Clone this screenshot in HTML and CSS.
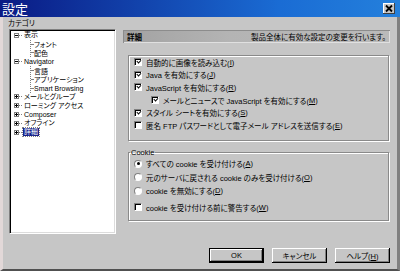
FILE: index.html
```html
<!DOCTYPE html>
<html lang="ja">
<head>
    <meta charset="UTF-8">
    <title>設定</title>
    <link rel="stylesheet" href="styles.css">
</head>
<body>
<div class="dialog">
    <div class="titlebar">
        <span class="title">設定</span>
        <span class="close">
            <svg viewBox="0 0 12 11" width="12" height="11"><path d="M3 2.5 L9 8.5 M9 2.5 L3 8.5" stroke="#000" stroke-width="1.8"/></svg>
        </span>
    </div>

    <div class="frame">
        <div class="cat-label">カテゴリ</div>

        <div class="main">
            <!-- category tree -->
            <div class="tree">
                <div class="node"><span class="tog"></span><span class="dash"></span><span class="lbl">表示</span></div>
                <div class="kids">
                    <div class="leaf">フォント</div>
                    <div class="leaf">配色</div>
                </div>
                <div class="node"><span class="tog"></span><span class="dash"></span><span class="lbl">Navigator</span></div>
                <div class="kids">
                    <div class="leaf">言語</div>
                    <div class="leaf">アプリケーション</div>
                    <div class="leaf">Smart Browsing</div>
                </div>
                <div class="node"><span class="tog plus"></span><span class="dash"></span><span class="lbl">メールとグループ</span></div>
                <div class="node"><span class="tog plus"></span><span class="dash"></span><span class="lbl">ローミング アクセス</span></div>
                <div class="node"><span class="tog plus"></span><span class="dash"></span><span class="lbl">Composer</span></div>
                <div class="node"><span class="tog plus"></span><span class="dash"></span><span class="lbl">オフライン</span></div>
                <div class="node"><span class="tog plus"></span><span class="dash"></span><span class="lbl sel">詳細</span></div>
            </div>

            <!-- settings panel -->
            <div class="panel">
                <div class="panel-head">
                    <b>詳細</b>
                    <span>製品全体に有効な設定の変更を行います。</span>
                </div>

                <div class="group general">
                    <div class="opt"><span class="cb on"></span>自動的に画像を読み込む(<u>I</u>)</div>
                    <div class="opt"><span class="cb on"></span>Java を有効にする(<u>J</u>)</div>
                    <div class="opt"><span class="cb on"></span>JavaScript を有効にする(<u>R</u>)</div>
                    <div class="opt sub"><span class="cb on"></span>メールとニュースで JavaScript を有効にする(<u>M</u>)</div>
                    <div class="opt"><span class="cb on"></span>スタイル シートを有効にする(<u>S</u>)</div>
                    <div class="opt"><span class="cb"></span>匿名 FTP パスワードとして電子メール アドレスを送信する(<u>E</u>)</div>
                </div>

                <fieldset class="group cookie">
                    <legend>Cookie</legend>
                    <div class="opt"><span class="rb on"></span>すべての cookie を受け付ける(<u>A</u>)</div>
                    <div class="opt"><span class="rb"></span>元のサーバに戻される cookie のみを受け付ける(<u>O</u>)</div>
                    <div class="opt"><span class="rb"></span>cookie を無効にする(<u>D</u>)</div>
                    <div class="opt warn"><span class="cb"></span>cookie を受け付ける前に警告する(<u>W</u>)</div>
                </fieldset>
            </div>
        </div>

        <div class="buttons">
            <button class="btn default">OK</button>
            <button class="btn">キャンセル</button>
            <button class="btn">ヘルプ(<u>H</u>)</button>
        </div>
    </div>
</div>
</body>
</html>
```

FILE: styles.css
```css
body {
    margin: 0;
    width: 400px;
    height: 271px;
    overflow: hidden;
    background-color: #c6c6c6;
    font-family: 'Liberation Sans', 'Noto Sans CJK JP', sans-serif;
    font-size: 7.5px;
    font-feature-settings: "palt";
    color: #000;
}

.dialog {
    display: flex;
    flex-direction: column;
    height: 271px;
}

/* title bar */
.titlebar {
    height: 17px;
    display: flex;
    align-items: center;
    justify-content: space-between;
    padding: 0 5px 0 2px;
    background: linear-gradient(to right, #0a1a84, #1a6cd4 70%, #2480dc);
}

.title {
    color: #fff;
    font-size: 13px;
    line-height: 14px;
    font-family: 'Noto Sans CJK JP', sans-serif;
}

.close {
    display: flex;
    width: 12px;
    height: 11px;
    background-color: #c6c6c6;
    box-shadow: inset -1px -1px 0 #404040, inset 1px 1px 0 #fff;
}

/* dialog body */
.frame {
    flex: 1;
    display: flex;
    flex-direction: column;
    padding: 2px 7px 0 6px;
    border-left: 3px solid #e2d8d8;
    border-right: 3px solid #808080;
    border-bottom: 2px solid #505050;
}

.cat-label {
    height: 10px;
    line-height: 9px;
    margin-left: -1px;
}

.main {
    display: flex;
}

/* tree */
.tree {
    width: 107px;
    height: 205px;
    box-sizing: border-box;
    padding-top: 1px;
    background-color: #fff;
    border-top: 1px solid #808080;
    border-left: 1px solid #808080;
    border-right: 1px solid #fff;
    border-bottom: 1px solid #fff;
    box-shadow: inset 1px 1px 0 #000, inset -1px -1px 0 #dcdcdc;
    font-size: 7px;
}

.node,
.leaf {
    display: flex;
    align-items: center;
    height: 8.8px;
    white-space: nowrap;
}

.node {
    padding-left: 4px;
}

.tog {
    position: relative;
    width: 5px;
    height: 5px;
    box-sizing: border-box;
    border: 1px solid #808080;
    background-color: #fff;
}

.tog::before {
    content: '';
    position: absolute;
    left: 0;
    top: 1px;
    width: 3px;
    height: 1px;
    background-color: #000;
}

.tog.plus::after {
    content: '';
    position: absolute;
    left: 1px;
    top: 0;
    width: 1px;
    height: 3px;
    background-color: #000;
}

.dash {
    width: 3px;
    border-top: 1px dotted #808080;
    margin-right: 1px;
}

.lbl {
    padding: 0 1px;
    line-height: 8px;
}

.lbl.sel {
    background-color: #14208a;
    color: #fff;
    outline: 1px dotted #808080;
}

.kids {
    margin-left: 20px;
    border-left: 1px dotted #808080;
}

.leaf::before {
    content: '';
    width: 2px;
    border-top: 1px dotted #808080;
    margin-right: 1px;
}

/* right panel */
.panel {
    width: 267px;
    margin-left: 7px;
    padding-top: 1px;
}

.panel-head {
    height: 13px;
    display: flex;
    align-items: center;
    justify-content: space-between;
    padding: 0 4px;
    background: linear-gradient(to right, #a2a2a2, #b4b4b4 40%, #bababa);
    box-shadow: inset 1px 1px 0 #8c8c8c, inset -1px -1px 0 #e0e0e0;
}

.panel-head b {
    font-weight: 700;
}

.group {
    margin: 0 0 0 5px;
    width: 261px;
    box-sizing: border-box;
    border: 1px solid #8a8a8a;
    box-shadow: 1px 1px 0 #fff, inset 1px 1px 0 #fff;
}

.general {
    margin-top: 12px;
    height: 86px;
    padding: 0 0 0 5px;
}

.cookie {
    margin-top: 7px;
    height: 73px;
    padding: 0 0 0 5px;
    min-width: 0;
}

.cookie legend {
    padding: 0 1px;
    margin-left: -4px;
    line-height: 9px;
}

.opt {
    display: flex;
    align-items: center;
    height: 12.6px;
    white-space: nowrap;
}

.cookie .opt {
    height: 13.5px;
}

.cookie .opt.warn {
    margin-top: 3px;
}

.opt.sub {
    padding-left: 17px;
}

/* checkbox */
.cb {
    position: relative;
    width: 8px;
    height: 8px;
    box-sizing: border-box;
    margin-right: 4px;
    background-color: #fff;
    border-top: 1px solid #808080;
    border-left: 1px solid #808080;
    border-right: 1px solid #fff;
    border-bottom: 1px solid #fff;
    box-shadow: inset 1px 1px 0 #000;
}

.cb.on::after {
    content: '';
    position: absolute;
    left: 1px;
    top: 0;
    width: 3px;
    height: 1.5px;
    border-left: 1.5px solid #000;
    border-bottom: 1.5px solid #000;
    transform: rotate(-45deg) translate(0, 1px);
}

/* radio */
.rb {
    position: relative;
    width: 8px;
    height: 8px;
    box-sizing: border-box;
    margin-right: 4px;
    border-radius: 50%;
    background-color: #fff;
    border: 1px solid;
    border-color: #808080 #fff #fff #808080;
}

.rb.on::after {
    content: '';
    position: absolute;
    left: 1.5px;
    top: 1.5px;
    width: 3px;
    height: 3px;
    border-radius: 50%;
    background-color: #000;
}

/* buttons */
.buttons {
    display: flex;
    justify-content: flex-end;
    gap: 8px;
    margin-top: 14px;
}

.btn {
    width: 55px;
    height: 15px;
    padding: 0;
    font: inherit;
    font-size: 7.5px;
    background-color: #c6c6c6;
    border: none;
    box-shadow: inset -1px -1px 0 #000, inset 1px 1px 0 #fff, inset -2px -2px 0 #808080;
}

.btn.default {
    box-shadow: inset 0 0 0 1px #000, inset -2px -2px 0 #000, inset 2px 2px 0 #fff, inset -3px -3px 0 #808080;
}
```
